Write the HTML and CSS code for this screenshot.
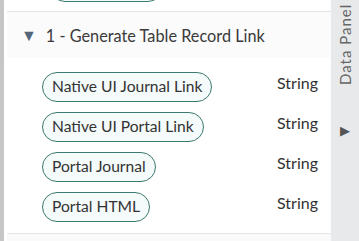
FILE: index.html
```html
<!DOCTYPE html>
<html lang="en">
<head>
    <meta charset="UTF-8">
    <title>Data Panel</title>
    <link rel="stylesheet" href="styles.css">
</head>
<body>
    <div class="rail"></div>
    <div class="main">
        <div class="prev">
            <span class="pill prev-pill"></span>
        </div>
        <div class="section-head">
            <span class="caret">&#9660;</span>
            <span class="title">1 - Generate Table Record Link</span>
        </div>
        <ul class="fields">
            <li class="field"><span class="pill">Native UI Journal Link</span><span class="type">String</span></li>
            <li class="field"><span class="pill">Native UI Portal Link</span><span class="type">String</span></li>
            <li class="field"><span class="pill">Portal Journal</span><span class="type">String</span></li>
            <li class="field"><span class="pill">Portal HTML</span><span class="type">String</span></li>
        </ul>
        <div class="next"></div>
    </div>
    <aside class="panel">
        <span class="panel-label">Data Panel</span>
        <span class="panel-arrow">&#9654;</span>
    </aside>
</body>
</html>
```

FILE: styles.css
```css
*
{
    margin:0;
    padding:0;
    box-sizing:border-box;
    font-family:Lato, "Open Sans", sans-serif;
}
body
{
    display:flex;
    height:241px;
    overflow:hidden;
    background:#fff;
    color:#333;
}
.rail
{
    width:4px;
    background:#c6c6c6;
}
.main
{
    flex:1;
    display:flex;
    flex-direction:column;
    margin-left:3px;
}
.prev
{
    height:11px;
    position:relative;
    overflow:hidden;
}
.prev-pill
{
    position:absolute;
    left:43px;
    bottom:9px;
    width:113px;
}
.section-head
{
    height:47px;
    display:flex;
    align-items:center;
    border-top:1px solid #e6e6e6;
    background:#fbfbfb;
    padding-left:14px;
}
.caret
{
    font-size:16px;
    color:#56667a;
    margin-right:9px;
}
.title
{
    font-size:16.3px;
    color:#3a3a3a;
}
.fields
{
    list-style:none;
    padding-top:14px;
}
.field
{
    height:40px;
    display:flex;
    align-items:flex-start;
    padding-left:35px;
    padding-right:13px;
}
.pill
{
    display:inline-block;
    height:30px;
    line-height:27px;
    padding:0 9px;
    border:1.5px solid #3b7a70;
    border-radius:15px;
    background:#f5fafa;
    font-size:15.6px;
    color:#333;
}
.type
{
    margin-left:auto;
    font-size:16px;
    color:#333;
    line-height:22px;
}
.next
{
    margin-top:auto;
    height:8px;
    border-top:1px solid #e6e6e6;
    background:#fafafa;
}
.panel
{
    width:28px;
    background:#e8e9eb;
    display:flex;
    flex-direction:column;
    align-items:center;
}
.panel-label
{
    writing-mode:vertical-rl;
    transform:rotate(180deg);
    font-size:15px;
    letter-spacing:1px;
    color:#666;
    margin-top:4px;
    height:86px;
    text-align:right;
}
.panel-arrow
{
    margin-top:32px;
    font-size:13px;
    color:#555;
}
```
